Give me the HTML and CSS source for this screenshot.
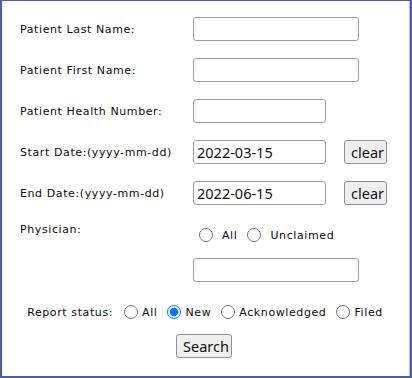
FILE: index.html
```html
<!DOCTYPE html>
<html lang="en">
<head>
    <meta charset="UTF-8">
    <title>Report Search</title>
    <link rel="stylesheet" href="styles.css">
</head>
<body>
<div class="frame">
    <form class="search">
        <div class="row">
            <span class="label">Patient Last Name:</span>
            <input type="text" class="wide" />
        </div>
        <div class="row">
            <span class="label">Patient First Name:</span>
            <input type="text" class="wide" />
        </div>
        <div class="row">
            <span class="label">Patient Health Number:</span>
            <input type="text" class="short" />
        </div>
        <div class="row">
            <span class="label">Start Date:(yyyy-mm-dd)</span>
            <input type="text" class="short" value="2022-03-15" />
            <button type="button" class="clear">clear</button>
        </div>
        <div class="row">
            <span class="label">End Date:(yyyy-mm-dd)</span>
            <input type="text" class="short" value="2022-06-15" />
            <button type="button" class="clear">clear</button>
        </div>
        <div class="row physician">
            <span class="label">Physician:</span>
            <span class="choices">
                <input type="radio" name="phys" id="PhysAll" /><label for="PhysAll">All</label>
                <input type="radio" name="phys" id="PhysNone" /><label for="PhysNone">Unclaimed</label>
            </span>
        </div>
        <div class="row">
            <span></span>
            <input type="text" class="wide" />
        </div>
        <div class="status">
            <span class="label">Report status:</span>
            <input type="radio" name="status" id="StAll" /><label for="StAll">All</label>
            <input type="radio" name="status" id="StNew" checked /><label for="StNew">New</label>
            <input type="radio" name="status" id="StAck" /><label for="StAck">Acknowledged</label>
            <input type="radio" name="status" id="StFiled" /><label for="StFiled">Filed</label>
        </div>
        <div class="submit">
            <button type="button" class="go">Search</button>
        </div>
    </form>
</div>
</body>
</html>
```

FILE: styles.css
```css
body { margin: 0; background-color: #ffffff; }
.frame { width: 412px; height: 378px; box-sizing: border-box; border: 2px solid #4a5dab; border-top-width: 1px; box-shadow: inset -1px 0 0 #b8b8c0; }
.search { padding: 16px 0 0 18px; font-family: "DejaVu Sans", Verdana, sans-serif; font-size: 11px; letter-spacing: 0.6px; color: #0c0c0c; }
.row { display: grid; grid-template-columns: 173px 151px auto; align-items: center; height: 24px; margin-bottom: 17px; }
.row input[type=text], .clear, .go { font-family: "Noto Sans", sans-serif; font-size: 14.5px; letter-spacing: 0; color: #111111; }
.row input[type=text] { box-sizing: border-box; height: 24px; border: 1px solid #9b9ba3; border-radius: 3px; padding: 0 3px; outline: none; }
.wide { width: 166px; }
.short { width: 133px; }
.clear, .go { box-sizing: border-box; height: 24px; padding: 0 6px; background-color: #efeff0; border: 1px solid #8f8f98; border-radius: 3px; line-height: 20px; }
.clear { width: 43px; }
.physician { align-items: start; margin-bottom: 12px; }
.physician .label { padding-top: 1px; }
.choices { display: flex; align-items: center; padding-top: 6px; }
.choices input { margin: 0 9px 0 6px; width: 14px; height: 14px; }
.choices label { margin-right: 4px; }
.status { display: flex; align-items: center; justify-content: center; height: 18px; margin: 21px 0 0 -20px; }
.status input { margin: 0 4px 0 10px; width: 14px; height: 14px; }
.status .label { margin-right: 1px; }
.submit { display: flex; justify-content: center; margin: 13px 0 0 -22px; }
.go { width: 56px; }
```
